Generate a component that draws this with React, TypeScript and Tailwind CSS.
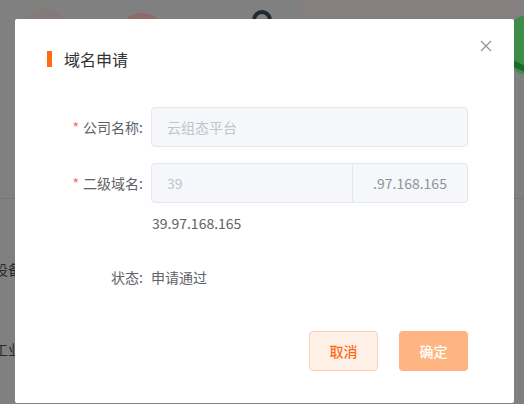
import React from 'react';

function CloseIcon(): React.JSX.Element {
  return (
    <svg width="12" height="12" viewBox="0 0 12 12" fill="none">
      <path d="M1 1L11 11M11 1L1 11" stroke="#909399" strokeWidth="1.2" />
    </svg>
  );
}

function Label({ text, required }: { text: string; required?: boolean }): React.JSX.Element {
  return (
    <div className="w-[136px] shrink-0 pr-[8px] text-right text-[14px] leading-[40px] text-[#606266]">
      {required && <span className="mr-[4px] text-[#f56c6c]">*</span>}
      {text}
    </div>
  );
}

export default function App(): React.JSX.Element {
  return (
    <div
      className="relative h-[404px] w-[524px] overflow-hidden bg-[#808080]"
      style={{ fontFamily: '"Noto Sans CJK SC", "Noto Sans", sans-serif' }}
    >
      {/* page behind the overlay */}
      <div className="absolute left-[25px] top-[8px] h-[40px] w-[40px] rounded-full bg-[#857a7a]" />
      <div className="absolute left-[118px] top-[13px] h-[50px] w-[48px] rounded-full bg-[#8e6a6a]" />
      <div className="absolute left-[252px] top-[10px] h-[20px] w-[20px] rounded-full border-[4px] border-[#1d2a35]" />
      <div className="absolute left-[300px] top-0 h-[20px] w-[260px] bg-[#857f7f]" />
      <div className="absolute left-[508px] top-[15px] h-[60px] w-[40px] rounded-full bg-[#3f8c4a]" />
      <div className="absolute left-[510px] top-[66px] h-[6px] w-[30px] rotate-[25deg] bg-[#1b6b27]" />
      <div className="absolute left-0 top-[198px] h-px w-[524px] bg-[#757575]" />
      <div className="absolute left-[-6px] top-[259px] text-[14px] text-[#2a2a2a]">设备</div>
      <div className="absolute left-[-6px] top-[339px] text-[14px] text-[#2a2a2a]">工业</div>

      {/* dialog */}
      <div className="absolute left-[15px] top-[19px] h-[384px] w-[499px] rounded-[2px] bg-white">
        <button className="absolute right-[22px] top-[21px] flex h-[12px] w-[12px] items-center justify-center">
          <CloseIcon />
        </button>

        <div className="flex items-center px-[32px] pt-[32px]">
          <span className="h-[16px] w-[5px] bg-[#ff6a13]" />
          <span className="ml-[12px] text-[16px] leading-[16px] text-[#303133]">域名申请</span>
        </div>

        <div className="mt-[40px] pr-[46px]">
          <div className="flex">
            <Label text="公司名称:" required />
            <div className="flex h-[40px] flex-1 items-center rounded-[4px] border border-[#e4e7ed] bg-[#f5f7fa] px-[15px] text-[14px] text-[#c0c4cc]">
              云组态平台
            </div>
          </div>

          <div className="mt-[16px] flex">
            <Label text="二级域名:" required />
            <div className="flex h-[40px] flex-1">
              <div className="flex flex-1 items-center rounded-l-[4px] border border-[#e4e7ed] bg-[#f5f7fa] px-[15px] text-[14px] text-[#c0c4cc]">
                39
              </div>
              <div className="flex w-[115px] items-center justify-center rounded-r-[4px] border border-l-0 border-[#e4e7ed] bg-[#f5f7fa] text-[14px] text-[#909399]">
                .97.168.165
              </div>
            </div>
          </div>

          <div className="ml-[137px] mt-[10px] text-[14px] leading-[20px] text-[#606266]">39.97.168.165</div>

          <div className="mt-[34px] flex items-center text-[14px] leading-[20px] text-[#606266]">
            <div className="w-[136px] shrink-0 pr-[8px] text-right">状态:</div>
            <div>申请通过</div>
          </div>

          <div className="mt-[44px] flex justify-end gap-[21px]">
            <button className="h-[40px] w-[69px] rounded-[4px] border border-[#ffcfb0] bg-[#fff0e7] text-[14px] font-medium text-[#ff6a13]">
              取消
            </button>
            <button className="h-[40px] w-[69px] rounded-[4px] bg-[#ffb582] text-[14px] font-medium text-white">
              确定
            </button>
          </div>
        </div>
      </div>
    </div>
  );
}
